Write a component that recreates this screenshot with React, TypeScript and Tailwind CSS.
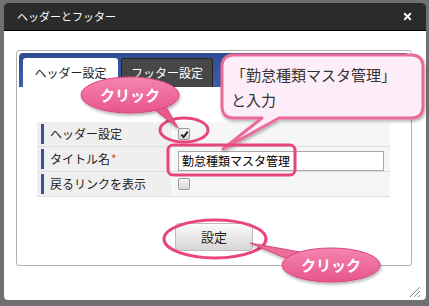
import { X } from 'lucide-react';

function CheckBox({ checked }: { checked?: boolean }) {
  return (
    <div className="w-[12px] h-[12px] rounded-[2px] border border-[#9a9a9a] bg-gradient-to-b from-[#f6f6f6] to-[#d6d6d6] flex items-center justify-center">
      {checked && (
        <svg width="9" height="9" viewBox="0 0 10 10">
          <path d="M1.5 5.2 L4 7.8 L8.6 1.8" fill="none" stroke="#222" strokeWidth="2.2" />
        </svg>
      )}
    </div>
  );
}

function Row({ label, required, children }: { label: string; required?: boolean; children: React.ReactNode }) {
  return (
    <div className="flex h-[25px] border-b border-[#dddddd]">
      <div className="w-[135px] bg-[#efefef] flex items-stretch py-[2px] pl-[4px]">
        <div className="border-l-[3px] border-[#34509a] pl-[6px] flex items-center text-[12px] text-[#222]">
          {label}
          {required && <span className="text-[#e2493c] ml-[1px]">*</span>}
        </div>
      </div>
      <div className="flex-1 bg-[#f6f6f6] border-l border-white pl-[5px] flex items-center">{children}</div>
    </div>
  );
}

export default function App() {
  return (
    <div className="relative w-[429px] h-[306px] bg-[#6f6f74] pt-[3px] pl-[4px] pr-[3px] pb-[6px] font-['Noto_Sans_CJK_JP',sans-serif]">
      <div className="h-full flex flex-col rounded-[4px] overflow-hidden bg-white">
        {/* title bar */}
        <div className="h-[28px] bg-[#2b2b2b] border-b border-black flex items-center justify-between px-[13px]">
          <span className="text-white text-[11px]">ヘッダーとフッター</span>
          <X className="w-[11px] h-[11px] text-white" strokeWidth={4} />
        </div>

        {/* body */}
        <div className="flex-1 pt-[19px] pl-[12px] pr-[14px]">
          <div className="border border-[#b2b2b2] rounded-[3px] p-[2px] pb-[14px]">
            <div className="h-[34px] bg-gradient-to-b from-[#2f4d92] to-[#3d5fab] rounded-t-[4px] pt-[5px] pl-[4px] flex items-end gap-[3px]">
              <div className="w-[95px] h-[29px] bg-white rounded-t-[3px] flex items-center justify-center text-[12px] text-[#222]">
                ヘッダー設定
              </div>
              <div className="w-[92px] h-[29px] bg-[#474747] border border-b-0 border-[#252525] rounded-t-[3px] flex items-center justify-center text-[12px] text-white">
                フッター設定
              </div>
            </div>

            <div className="ml-[18px] mt-[35px] w-[353px]">
              <Row label="ヘッダー設定">
                <CheckBox checked />
              </Row>
              <Row label="タイトル名" required>
                <input
                  readOnly
                  value="勤怠種類マスタ管理"
                  className="w-[206px] h-[20px] mt-[3px] border border-[#a9a9a9] bg-white px-[3px] text-[12px] text-black outline-none font-['Noto_Sans_CJK_JP',sans-serif]"
                />
              </Row>
              <Row label="戻るリンクを表示">
                <CheckBox />
              </Row>
            </div>

            <div className="flex justify-center mt-[26px]">
              <button className="w-[78px] h-[28px] rounded-[4px] border border-[#bdbdbd] bg-gradient-to-b from-[#fbfbfb] to-[#d6d6d6] text-[13px] text-[#222] font-['Noto_Sans_CJK_JP',sans-serif]">
                設定
              </button>
            </div>
          </div>
        </div>
      </div>

      {/* annotations */}
      <svg className="absolute inset-0 pointer-events-none" width="429" height="306" viewBox="0 0 429 306">
        <defs>
          <linearGradient id="pk" x1="0" y1="0" x2="0" y2="1">
            <stop offset="0" stopColor="#f585b0" />
            <stop offset="1" stopColor="#e7558b" />
          </linearGradient>
          <filter id="sh" x="-20%" y="-30%" width="140%" height="170%">
            <feDropShadow dx="1" dy="2" stdDeviation="1.5" floodColor="#000" floodOpacity="0.3" />
          </filter>
        </defs>

        {/* callout for input */}
        <path
          d="M234 55 H411 Q423 55 423 67 V106 Q423 118 411 118 H279 L223 149 L262 118 H234 Q222 118 222 106 V67 Q222 55 234 55 Z"
          fill="#fcedf8"
          stroke="#ea6a98"
          strokeWidth="3"
          strokeLinejoin="round"
          filter="url(#sh)"
        />

        {/* highlight rectangles / ellipses */}
        <rect x="168" y="145" width="127" height="30" rx="5" fill="none" stroke="#e8457f" strokeWidth="3" />
        <ellipse cx="184" cy="130" rx="24" ry="12" fill="none" stroke="#e8457f" strokeWidth="3" />
        <ellipse cx="215" cy="239" rx="51" ry="19" fill="none" stroke="#e8457f" strokeWidth="3" />

        {/* click bubble top */}
        <g filter="url(#sh)">
          <polygon points="150,106 178,128 165,105" fill="#e9598d" stroke="#d9467c" strokeWidth="1" />
          <ellipse cx="130" cy="95" rx="49" ry="18" fill="url(#pk)" stroke="#d9467c" strokeWidth="1" />
        </g>

        {/* click bubble bottom */}
        <g filter="url(#sh)">
          <polygon points="290,260 250,243 300,252" fill="#ec6c9a" stroke="#d9467c" strokeWidth="1" />
          <ellipse cx="331" cy="265" rx="49" ry="17" fill="url(#pk)" stroke="#d9467c" strokeWidth="1" />
        </g>

        {/* resize grip */}
        <g stroke="#8a8a8a" strokeWidth="1">
          <line x1="420" y1="287" x2="410" y2="297" />
          <line x1="420" y1="291" x2="414" y2="297" />
          <line x1="420" y1="295" x2="418" y2="297" />
        </g>
      </svg>

      <div className="absolute left-[231px] top-[62px] text-[15px] leading-[25px] text-[#333] pointer-events-none">
        「勤怠種類マスタ管理」
        <br />
        と入力
      </div>
      <div className="absolute left-[81px] top-[77px] w-[98px] h-[36px] flex items-center justify-center text-white text-[15px] font-bold pointer-events-none">
        クリック
      </div>
      <div className="absolute left-[282px] top-[248px] w-[98px] h-[34px] flex items-center justify-center text-white text-[15px] font-bold pointer-events-none">
        クリック
      </div>
    </div>
  );
}
